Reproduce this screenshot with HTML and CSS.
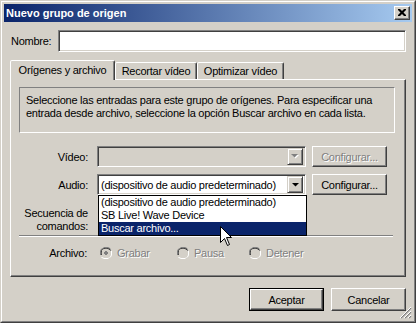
FILE: index.html
```html
<!DOCTYPE html>
<html lang="es">
<head>
<meta charset="utf-8">
<title>Nuevo grupo de origen</title>
<link rel="stylesheet" href="styles.css">
</head>
<body>
<div class="window">
  <div class="frame">
    <div class="titlebar">
      <span class="title">Nuevo grupo de origen</span>
      <div class="close">
        <svg width="8" height="7" viewBox="0 0 8 7"><path d="M0 0h2l2 2 2-2h2v1l-2.5 2.5L8 6v1H6L4 5 2 7H0V6l2.5-2.5L0 1z" fill="#000"/></svg>
      </div>
    </div>
    <div class="client">
      <div class="name-row">
        <span class="name-label">Nombre:</span>
        <div class="edit"></div>
      </div>
      <div class="tabs">
        <div class="tab tab-selected tab-w1">Orígenes y archivo</div>
        <div class="tab tab-w2">Recortar vídeo</div>
        <div class="tab tab-w3">Optimizar vídeo</div>
      </div>
      <div class="panel">
        <div class="info">Seleccione las entradas para este grupo de orígenes. Para especificar una entrada desde archivo, seleccione la opción Buscar archivo en cada lista.</div>
        <div class="form">
          <span class="flabel">Vídeo:</span>
          <div class="combo combo-disabled">
            <span class="combo-text"></span>
            <span class="arrow-btn"><svg width="8" height="5" viewBox="0 0 8 5"><path d="M1 1h7L4.5 4.5z" fill="#fff"/><path d="M0 0h7L3.5 3.5z" fill="#808080"/></svg></span>
          </div>
          <div class="btn btn-disabled">Configurar...</div>

          <span class="flabel">Audio:</span>
          <div class="combo">
            <span class="combo-text">(dispositivo de audio predeterminado)</span>
            <span class="arrow-btn"><svg width="7" height="4" viewBox="0 0 7 4"><path d="M0 0h7L3.5 3.5z" fill="#000"/></svg></span>
            <ul class="droplist">
              <li>(dispositivo de audio predeterminado)</li>
              <li>SB Live! Wave Device</li>
              <li class="hl">Buscar archivo...</li>
            </ul>
          </div>
          <div class="btn">Configurar...</div>

          <span class="flabel flabel-multi">Secuencia de<br>comandos:</span>
        </div>
        <div class="sep"></div>
        <div class="radio-row">
          <span class="flabel">Archivo:</span>
          <div class="radios">
            <span class="radio">
              <svg width="12" height="12" viewBox="0 0 12 12"><path d="M4 0h4l2 1 1 2v1h-1V3L8 1H4L2 2 1 4v4H0V4l1-2 2-1z" fill="#808080"/><path d="M4 1h4l2 1v1H9L8 2H4L2 3 2 4v4H1V4l1-2z" fill="#404040"/><path d="M11 4h1v4l-1 2-2 1-1 1H4L2 11l-1-1h1l2 1h4l2-1 1-2z" fill="#fff"/><circle cx="6" cy="6" r="4.3" fill="#D4D0C8"/><rect x="5" y="4" width="2" height="4" fill="#808080"/><rect x="4" y="5" width="4" height="2" fill="#808080"/></svg>
              <span class="rtext">Grabar</span>
            </span>
            <span class="radio">
              <svg width="12" height="12" viewBox="0 0 12 12"><path d="M4 0h4l2 1 1 2v1h-1V3L8 1H4L2 2 1 4v4H0V4l1-2 2-1z" fill="#808080"/><path d="M4 1h4l2 1v1H9L8 2H4L2 3 2 4v4H1V4l1-2z" fill="#404040"/><path d="M11 4h1v4l-1 2-2 1-1 1H4L2 11l-1-1h1l2 1h4l2-1 1-2z" fill="#fff"/><circle cx="6" cy="6" r="4.3" fill="#D4D0C8"/></svg>
              <span class="rtext">Pausa</span>
            </span>
            <span class="radio">
              <svg width="12" height="12" viewBox="0 0 12 12"><path d="M4 0h4l2 1 1 2v1h-1V3L8 1H4L2 2 1 4v4H0V4l1-2 2-1z" fill="#808080"/><path d="M4 1h4l2 1v1H9L8 2H4L2 3 2 4v4H1V4l1-2z" fill="#404040"/><path d="M11 4h1v4l-1 2-2 1-1 1H4L2 11l-1-1h1l2 1h4l2-1 1-2z" fill="#fff"/><circle cx="6" cy="6" r="4.3" fill="#D4D0C8"/></svg>
              <span class="rtext">Detener</span>
            </span>
          </div>
        </div>
      </div>
      <div class="buttons">
        <div class="btn-default"><div class="btn btn-inner">Aceptar</div></div>
        <div class="btn btn-big">Cancelar</div>
      </div>
    </div>
    <svg class="grip" width="12" height="12" viewBox="0 0 12 12">
      <path d="M11 1L1 11M11 5L5 11M11 9L9 11" stroke="#808080" stroke-width="1.2"/>
      <path d="M11 0L0 11M11 4L4 11M11 8L8 11" stroke="#fff" stroke-width="1"/>
    </svg>
  </div>
</div>
<svg class="cursor" width="13" height="21" viewBox="0 0 13 21">
  <path d="M0.5 0.5V16.5L4.5 12.5L7.5 19.5L9.5 18.5L6.5 11.5H11.5Z" fill="#fff" stroke="#000" stroke-width="1" stroke-linejoin="miter"/>
</svg>
</body>
</html>
```
FILE: styles.css
```css
* { box-sizing: border-box; }
html, body { margin: 0; padding: 0; }
body {
  width: 416px;
  height: 323px;
  overflow: hidden;
  background: #D4D0C8;
  font-family: "Liberation Sans", Arial, sans-serif;
  font-size: 11px;
  letter-spacing: -0.25px;
  color: #000;
  position: relative;
}
.window {
  width: 416px;
  height: 323px;
  border: 1px solid;
  border-color: #D4D0C8 #404040 #404040 #D4D0C8;
  background: #D4D0C8;
}
.frame {
  height: 100%;
  border: 1px solid;
  border-color: #fff #808080 #808080 #fff;
  padding: 2px;
  display: flex;
  flex-direction: column;
  position: relative;
}
.titlebar {
  flex: none;
  height: 18px;
  background: linear-gradient(to right, #0A246A, #A6CAF0);
  display: flex;
  align-items: center;
  justify-content: space-between;
  padding: 0 2px;
}
.title {
  color: #fff;
  font-weight: bold;
  font-size: 11px;
  letter-spacing: 0;
}
.close {
  width: 16px;
  height: 14px;
  background: #D4D0C8;
  border: 1px solid;
  border-color: #fff #404040 #404040 #fff;
  box-shadow: inset -1px -1px #808080;
  display: flex;
  align-items: center;
  justify-content: center;
  padding: 0 1px 1px 0;
}
.client {
  flex: 1;
  padding: 0 6px;
  display: flex;
  flex-direction: column;
}
.name-row {
  margin-top: 8px;
  display: flex;
  align-items: center;
  height: 22px;
}
.name-label { width: 48px; padding-left: 1px; }
.edit {
  flex: 1;
  height: 22px;
  background: #fff;
  border: 1px solid;
  border-color: #808080 #fff #fff #808080;
  box-shadow: inset 1px 1px #404040, inset -1px -1px #D4D0C8;
}
.tabs {
  margin-top: 8px;
  height: 19px;
  display: flex;
  align-items: flex-end;
  position: relative;
  z-index: 1;
}
.tab {
  height: 17px;
  border: 1px solid;
  border-bottom: none;
  border-color: #fff #404040 transparent #fff;
  box-shadow: inset -1px 0 #808080;
  border-radius: 2px 2px 0 0;
  display: flex;
  align-items: center;
  justify-content: center;
  background: #D4D0C8;
}
.tab-selected {
  height: 20px;
  margin-bottom: -1px;
  padding-bottom: 2px;
}
.tab-w1 { width: 105px; }
.tab-w2 { width: 82px; }
.tab-w3 { width: 87px; }
.panel {
  height: 198px;
  border: 1px solid;
  border-color: #fff #404040 #404040 #fff;
  box-shadow: inset -1px -1px #808080;
  padding: 7px 8px 0 8px;
}
.info {
  height: 46px;
  border: 1px solid;
  border-color: #808080 #fff #fff #808080;
  padding: 6px 6px 0 6px;
  line-height: 13px;
  width: 376px;
}
.form {
  margin-top: 13px;
  display: grid;
  grid-template-columns: 86px 215px 75px;
  grid-auto-rows: 21px;
  row-gap: 7px;
  margin-left: -8px;
}
.flabel {
  text-align: right;
  padding-right: 9px;
  align-self: center;
}
.flabel-multi {
  line-height: 13px;
  align-self: start;
  margin-top: 5px;
}
.combo {
  width: 209px;
  height: 21px;
  background: #fff;
  border: 1px solid;
  border-color: #808080 #fff #fff #808080;
  box-shadow: inset 1px 1px #404040, inset -1px -1px #D4D0C8;
  display: flex;
  align-items: center;
  padding: 2px;
  position: relative;
}
.combo-disabled { background: #D4D0C8; }
.combo-text { flex: 1; padding-left: 1px; white-space: nowrap; overflow: hidden; }
.arrow-btn {
  width: 16px;
  height: 17px;
  background: #D4D0C8;
  border: 1px solid;
  border-color: #D4D0C8 #404040 #404040 #D4D0C8;
  box-shadow: inset 1px 1px #fff, inset -1px -1px #808080;
  display: flex;
  align-items: center;
  justify-content: center;
}
.droplist {
  position: absolute;
  left: 0;
  top: 20px;
  width: 209px;
  margin: 0;
  padding: 0;
  list-style: none;
  background: #fff;
  border: 1px solid #000;
  z-index: 5;
}
.droplist li {
  height: 13px;
  line-height: 13px;
  padding-left: 2px;
  white-space: nowrap;
}
.droplist li.hl { background: #0A246A; color: #fff; }
.btn {
  height: 21px;
  background: #D4D0C8;
  border: 1px solid;
  border-color: #fff #404040 #404040 #fff;
  box-shadow: inset -1px -1px #808080;
  display: flex;
  align-items: center;
  justify-content: center;
}
.btn-disabled { color: #808080; text-shadow: 1px 1px #fff; }
.form .btn { width: 75px; }
.sep {
  margin-top: 12px;
  height: 2px;
  border-top: 1px solid #808080;
  border-bottom: 1px solid #fff;
  width: 374px;
}
.radio-row {
  margin-top: 9px;
  display: grid;
  grid-template-columns: 86px auto;
  margin-left: -8px;
  height: 14px;
  align-items: center;
}
.radio-row .flabel { padding-right: 10px; }
.radios {
  display: grid;
  grid-template-columns: 77px 72px auto;
  padding-left: 3px;
}
.radio { display: flex; align-items: center; gap: 5px; }
.radio svg { flex: none; }
.rtext { color: #808080; text-shadow: 1px 1px #fff; }
.buttons {
  margin-top: 11px;
  display: flex;
  justify-content: flex-end;
  gap: 7px;
}
.btn-default {
  width: 75px;
  height: 23px;
  border: 1px solid #000;
}
.btn-inner { height: 21px; }
.btn-big { width: 75px; height: 23px; }
.grip { position: absolute; right: 2px; bottom: 2px; }
.cursor { position: absolute; left: 220px; top: 226px; z-index: 10; }
```
